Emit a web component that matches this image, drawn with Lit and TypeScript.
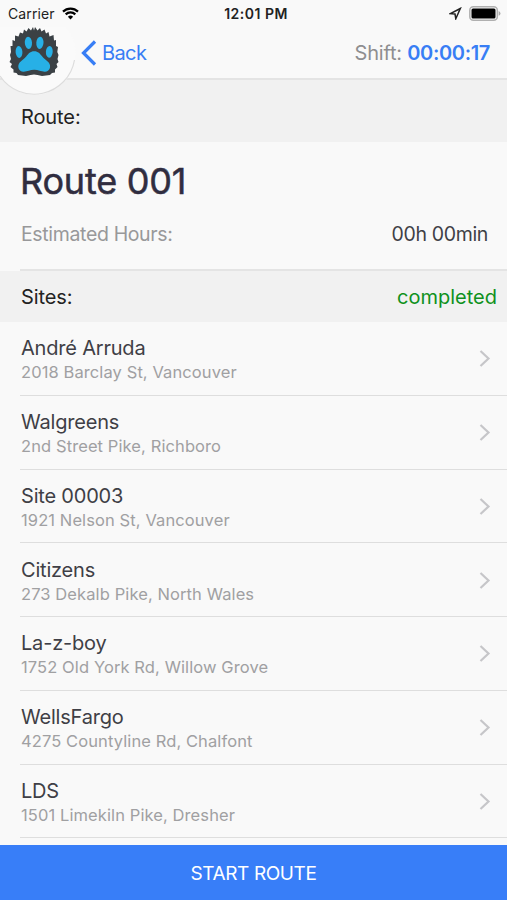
import { LitElement, html, css } from "lit";
import { customElement } from "lit/decorators.js";

interface Site {
  name: string;
  address: string;
}

const SITES: Site[] = [
  { name: "André Arruda", address: "2018 Barclay St, Vancouver" },
  { name: "Walgreens", address: "2nd Street Pike, Richboro" },
  { name: "Site 00003", address: "1921 Nelson St, Vancouver" },
  { name: "Citizens", address: "273 Dekalb Pike, North Wales" },
  { name: "La-z-boy", address: "1752 Old York Rd, Willow Grove" },
  { name: "WellsFargo", address: "4275 Countyline Rd, Chalfont" },
  { name: "LDS", address: "1501 Limekiln Pike, Dresher" },
];

@customElement("app-root")
export class AppRoot extends LitElement {
  static styles = css`
    :host {
      display: flex;
      flex-direction: column;
      position: relative;
      box-sizing: border-box;
      height: 900px;
      overflow: hidden;
      background: #f9f9f9;
      color: #3f3f46;
      font-family: Inter, "Liberation Sans", sans-serif;
      white-space: nowrap;
    }
    svg { display: block; flex: none; }
    .top {
      position: relative;
      flex: none;
      height: 80px;
      border-bottom: 2px solid #e4e4e4;
      box-sizing: border-box;
    }
    .status {
      display: grid;
      grid-template-columns: 1fr auto 1fr;
      align-items: center;
      height: 27px;
      padding: 0 6px 0 8px;
      box-sizing: border-box;
      font-size: 14px;
      color: #222;
    }
    .carrier { display: flex; align-items: center; gap: 7px; letter-spacing: 0.1px; }
    .time { padding-left: 3px; font-weight: 600; font-size: 14px; letter-spacing: 0.5px; }
    .right { display: flex; align-items: center; justify-content: flex-end; gap: 7px; }
    .nav {
      display: flex;
      align-items: center;
      justify-content: space-between;
      height: 51px;
      padding: 0 17px 0 81px;
      font-size: 20px;
    }
    .back { display: flex; align-items: center; gap: 5px; color: #387ef5; letter-spacing: -0.6px; }
    .shift { color: #8e8e90; letter-spacing: -0.2px; }
    .shift b { font-weight: 600; color: #387ef5; letter-spacing: -0.35px; }
    .badge {
      position: absolute;
      z-index: 1;
      left: 0;
      top: 26px;
    }
    .bar {
      flex: none;
      display: flex;
      align-items: center;
      justify-content: space-between;
      padding: 0 10px 0 21px;
      background: #f1f1f1;
      font-size: 20px;
      letter-spacing: -0.1px;
      color: #222;
    }
    .bar.route { height: 62px; padding-top: 12px; box-sizing: border-box; }
    .bar.sites { height: 51px; }
    .done { color: #0f9120; letter-spacing: 0; }
    .summary {
      flex: none;
      height: 129px;
      box-sizing: border-box;
      margin-left: 20px;
      padding: 15px 19px 0 0;
      border-bottom: 2px solid #e4e4e4;
    }
    h1 { margin: 0; font-size: 36px; line-height: 49px; font-weight: 400; letter-spacing: -0.2px; color: #302d40; -webkit-text-stroke: 0.5px #302d40; }
    .hours { display: flex; justify-content: space-between; margin-top: 16px; padding-left: 1px; font-size: 19.5px; line-height: 24px; letter-spacing: -0.35px; }
    .hours .label { color: #98989a; }
    .list { flex: 1; overflow: hidden; min-height: 0; }
    .row {
      display: flex;
      align-items: center;
      justify-content: space-between;
      box-sizing: border-box;
      height: 73.75px;
      margin-left: 20px;
      padding: 0 16px 0 1px;
      border-bottom: 1px solid #dedede;
    }
    .text { padding-top: 4px; }
    .name { font-size: 20px; line-height: 25px; letter-spacing: -0.2px; }
    .addr { font-size: 16.5px; line-height: 23px; color: #a0a0a2; letter-spacing: 0.1px; }
    .start {
      flex: none;
      height: 55px;
      border: 0;
      padding: 2px 0 0;
      background: #387ef8;
      color: #fff;
      font: 400 19px Inter, "Liberation Sans", sans-serif;
      letter-spacing: -0.4px;
    }
  `;

  private row(site: Site) {
    return html`<div class="row">
      <div class="text">
        <div class="name">${site.name}</div>
        <div class="addr">${site.address}</div>
      </div>
      <svg width="13" height="18" viewBox="0 0 13 18" fill="none" stroke="#c6c6c9" stroke-width="2.200">
        <path d="M2.500 2 10.500 9.500l-8 7.500" />
      </svg>
    </div>`;
  }

  render() {
    return html`
      <header class="top">
        <div class="status">
          <div class="carrier">
            <span>Carrier</span>
            <svg width="17" height="13" viewBox="0 0 17 13" fill="none" stroke="#000" stroke-width="2.200">
              <path d="M1 4.600a10.800 10.800 0 0 1 15 0M3.700 7.400a6.900 6.900 0 0 1 9.600 0" />
              <path d="M8.500 12.500 5.900 9.800a3.700 3.700 0 0 1 5.200 0z" fill="#000" stroke="none" />
            </svg>
          </div>
          <span class="time">12:01 PM</span>
          <div class="right">
            <svg width="13" height="13" viewBox="0 0 13 13" fill="none" stroke="#222" stroke-width="1.500">
              <path d="M11.300 1.500 1.500 6.600l4.500.4.800 4.700z" />
            </svg>
            <svg width="32" height="15" viewBox="0 0 32 15">
              <rect x=".8" y=".8" width="27.500" height="13.400" rx="3.500" fill="none" stroke="#b0b0b0" stroke-width="1.500" />
              <rect x="2.500" y="2.500" width="24" height="10" rx="1.500" />
              <path d="M29.600 5v4.800q1.900-.8 1.900-2.400T29.600 5z" fill="#aaa" />
            </svg>
          </div>
        </div>
        <nav class="nav">
          <div class="back">
            <svg width="16" height="26" viewBox="0 0 16 26" fill="none" stroke="#387ef5" stroke-width="3.200">
              <path d="M14 1.500 2.500 13 14 24.500" />
            </svg>
            <span>Back</span>
          </div>
          <div class="shift">Shift: <b>00:00:17</b></div>
        </nav>
      </header>
      <svg class="badge" width="78" height="70" viewBox="0 26 78 70">
        <path d="M0 27H66Q76 38 75.500 54A41 41 0 0 1 0 76z" fill="#fafafa" />
        <path d="M74.500 60A41 41 0 0 1 0 76" fill="none" stroke="#dcdcdc" stroke-width="1.200" />
        <path
          fill="#3b4145"
          d="M34 30.500L35 27L37.500 30.500L40 28L41.500 31.500L44.500 29.500L46 33.500L48.500 32L49.500 36.500L53.500 35L54 40.500L56 40L56 46L58 47L57.300 52L58.500 55L57.500 59L58.500 62L56.500 64L57.500 67L55 69.500L55 72.500L52 73L50 75L46 75.500L42 76L37.500 75L34 74.500L30.500 75L26 76L22 75.500L18 75L16.500 73L13.500 72.500L13.500 69.500L10.500 67L12 64L9.500 62L11 59L10 55L11 52L10.500 46L12.500 46L12.500 40L15 41L15 35.500L18.500 36.500L20 32.500L23 33.500L24 29.500L26.500 31.500L28.500 28L31 30.500L33 27z"
        />
        <g fill="#27b0e6">
          <ellipse cx="28.400" cy="42.800" rx="3.600" ry="6.100" transform="rotate(-4 28.400 42.800)" />
          <ellipse cx="39.900" cy="42.800" rx="3.600" ry="6.100" transform="rotate(4 39.900 42.800)" />
          <ellipse cx="19" cy="52" rx="3.400" ry="5.900" transform="rotate(-4 19 52)" />
          <ellipse cx="49.300" cy="51.800" rx="3.400" ry="5.900" transform="rotate(4 49.300 51.800)" />
          <path d="M34.200 51.300c4 0 5.800 2.500 7.800 5 2 2.600 4.700 4 6.700 6.300 3 3.800 1 9.400-4 9.200-3.800-.2-6.300-2-10.500-2s-6.700 1.800-10.500 2c-5 .2-7-5.400-4-9.200 2-2.300 4.700-3.700 6.700-6.300 2-2.500 3.800-5 7.800-5z" />
        </g>
      </svg>
      <div class="bar route"><span>Route:</span></div>
      <section class="summary">
        <h1>Route 001</h1>
        <div class="hours"><span class="label">Estimated Hours:</span><span>00h 00min</span></div>
      </section>
      <div class="bar sites"><span>Sites:</span><span class="done">completed</span></div>
      <main class="list">${SITES.map((s) => this.row(s))}</main>
      <button class="start">START ROUTE</button>
    `;
  }
}
